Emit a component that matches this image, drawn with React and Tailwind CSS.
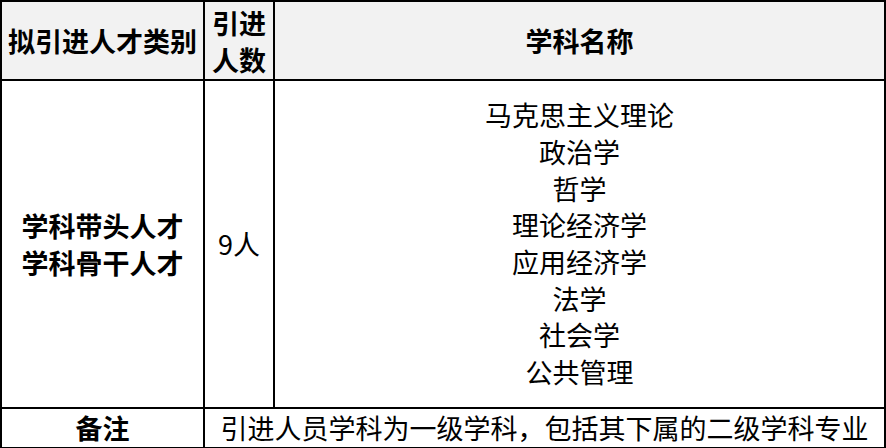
export default function App() {
    const subjects = ["马克思主义理论", "政治学", "哲学", "理论经济学", "应用经济学", "法学", "社会学", "公共管理"]

    return (
        <div
            className="w-[886px] h-[448px] bg-white text-black text-[27px] overflow-hidden"
            style={{ fontFamily: '"Noto Sans CJK SC", "Noto Sans", sans-serif' }}
        >
            <table className="w-[886px] border-collapse table-fixed">
                <colgroup>
                    <col className="w-[203px]" />
                    <col className="w-[70px]" />
                    <col />
                </colgroup>
                <tbody>
                    <tr className="h-[79px] bg-[#f2f2f2] font-bold">
                        <td className="border-2 border-black text-center align-middle leading-[36px] px-0">拟引进人才类别</td>
                        <td className="border-2 border-black text-center align-middle leading-[37px]">
                            引进<br />人数
                        </td>
                        <td className="border-2 border-black text-center align-middle leading-[36px]">学科名称</td>
                    </tr>
                    <tr className="h-[328px]">
                        <td className="border-2 border-black text-center align-middle font-bold leading-[37px]">
                            学科带头人才<br />学科骨干人才
                        </td>
                        <td className="border-2 border-black text-center align-middle leading-[36px]">9人</td>
                        <td className="border-2 border-black text-center align-middle leading-[36.7px]">
                            {subjects.map((s, i) => (
                                <div key={i}>{s}</div>
                            ))}
                        </td>
                    </tr>
                    <tr className="h-[40px]">
                        <td className="border-2 border-black text-center align-middle font-bold leading-[36px]">备注</td>
                        <td colSpan={2} className="border-2 border-black text-center align-middle leading-[36px]">
                            引进人员学科为一级学科，包括其下属的二级学科专业
                        </td>
                    </tr>
                </tbody>
            </table>
        </div>
    )
}
